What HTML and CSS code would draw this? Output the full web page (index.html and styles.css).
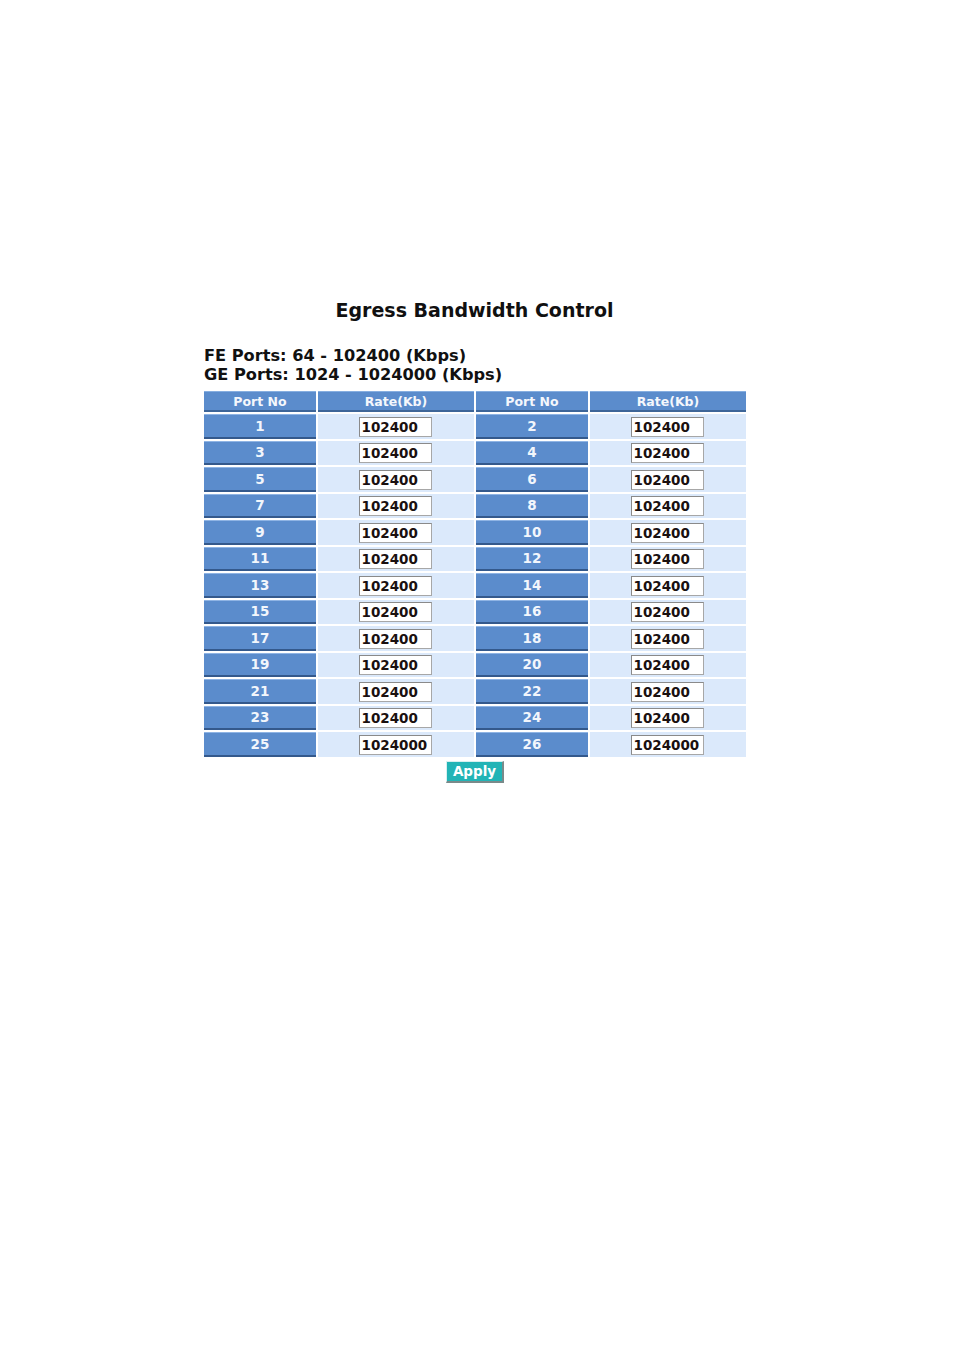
FILE: index.html
```html
<!DOCTYPE html>
<html>
<head>
<meta charset="utf-8">
<link rel="stylesheet" href="styles.css">
</head>
<body>
<div class="page">
  <h1 class="title">Egress Bandwidth Control</h1>
  <div class="info">
    <div>FE Ports: 64 - 102400 (Kbps)</div>
    <div>GE Ports: 1024 - 1024000 (Kbps)</div>
  </div>
  <table class="grid">
    <thead>
      <tr>
        <th class="c-port">Port No</th>
        <th class="c-rate">Rate(Kb)</th>
        <th class="c-port">Port No</th>
        <th class="c-rate">Rate(Kb)</th>
      </tr>
    </thead>
    <tbody>
      <tr><td class="port">1</td><td class="rate"><input class="field" value="102400"></td><td class="port">2</td><td class="rate"><input class="field" value="102400"></td></tr>
      <tr><td class="port">3</td><td class="rate"><input class="field" value="102400"></td><td class="port">4</td><td class="rate"><input class="field" value="102400"></td></tr>
      <tr><td class="port">5</td><td class="rate"><input class="field" value="102400"></td><td class="port">6</td><td class="rate"><input class="field" value="102400"></td></tr>
      <tr><td class="port">7</td><td class="rate"><input class="field" value="102400"></td><td class="port">8</td><td class="rate"><input class="field" value="102400"></td></tr>
      <tr><td class="port">9</td><td class="rate"><input class="field" value="102400"></td><td class="port">10</td><td class="rate"><input class="field" value="102400"></td></tr>
      <tr><td class="port">11</td><td class="rate"><input class="field" value="102400"></td><td class="port">12</td><td class="rate"><input class="field" value="102400"></td></tr>
      <tr><td class="port">13</td><td class="rate"><input class="field" value="102400"></td><td class="port">14</td><td class="rate"><input class="field" value="102400"></td></tr>
      <tr><td class="port">15</td><td class="rate"><input class="field" value="102400"></td><td class="port">16</td><td class="rate"><input class="field" value="102400"></td></tr>
      <tr><td class="port">17</td><td class="rate"><input class="field" value="102400"></td><td class="port">18</td><td class="rate"><input class="field" value="102400"></td></tr>
      <tr><td class="port">19</td><td class="rate"><input class="field" value="102400"></td><td class="port">20</td><td class="rate"><input class="field" value="102400"></td></tr>
      <tr><td class="port">21</td><td class="rate"><input class="field" value="102400"></td><td class="port">22</td><td class="rate"><input class="field" value="102400"></td></tr>
      <tr><td class="port">23</td><td class="rate"><input class="field" value="102400"></td><td class="port">24</td><td class="rate"><input class="field" value="102400"></td></tr>
      <tr><td class="port">25</td><td class="rate"><input class="field" value="1024000"></td><td class="port">26</td><td class="rate"><input class="field" value="1024000"></td></tr>
    </tbody>
  </table>
  <div class="actions">
    <button class="apply" type="button">Apply</button>
  </div>
</div>
</body>
</html>
```
FILE: styles.css
```css
html, body {
  margin: 0;
  padding: 0;
  background: #ffffff;
}
body {
  font-family: "DejaVu Sans", Verdana, sans-serif;
  font-weight: bold;
  color: #111111;
}
.page {
  width: 545px;
  margin-left: 202px;
  padding-top: 297px;
}
.title {
  margin: 0;
  font-size: 19px;
  line-height: 26px;
  text-align: center;
  color: #101010;
}
.info {
  margin-top: 23px;
  padding-left: 2px;
  font-size: 16.2px;
  line-height: 19px;
  color: #111111;
}
.grid {
  margin-top: 5px;
  border-collapse: separate;
  border-spacing: 2px;
  width: 546px;
  table-layout: fixed;
}
.c-port { width: 112px; }
.c-rate { width: 156px; }
.grid th {
  height: 18px;
  padding: 0;
  background: #5b8ccc;
  color: #f4f7fc;
  font-size: 12.5px;
  font-weight: bold;
  line-height: 17px;
  text-align: center;
  border-top: 1px solid #86aee0;
  border-bottom: 2px solid #3d6598;
}
.grid td {
  height: 24.5px;
  padding: 0;
  text-align: center;
  box-sizing: border-box;
}
.port {
  background: #5b8ccc;
  color: #f2f6fc;
  font-size: 13.5px;
  border-top: 1px solid #8fb4e4;
  border-bottom: 2px solid #34598c;
}
.rate {
  background: #dbe9fb;
}
.field {
  width: 73px;
  height: 20px;
  box-sizing: border-box;
  margin: 0 0 0 -2px;
  padding: 0 2px;
  border: 1px solid #a7a7a7;
  border-top-color: #8a8a8a;
  border-left-color: #8a8a8a;
  background: #ffffff;
  font-family: "DejaVu Sans", Verdana, sans-serif;
  font-weight: bold;
  font-size: 13.5px;
  color: #1a1010;
  vertical-align: middle;
  display: inline-block;
}
.actions {
  display: flex;
  justify-content: center;
  margin-top: 2px;
}
.apply {
  width: 58px;
  height: 22px;
  margin: 0 0 0 1px;
  padding: 0;
  background: #22b4b6;
  color: #ffffff;
  font-family: "DejaVu Sans", Verdana, sans-serif;
  font-weight: bold;
  font-size: 13.5px;
  border-style: solid;
  border-width: 1px 2px 2px 1px;
  border-color: #d8f0f0 #7a8a8a #7a8a8a #d8f0f0;
}
```
